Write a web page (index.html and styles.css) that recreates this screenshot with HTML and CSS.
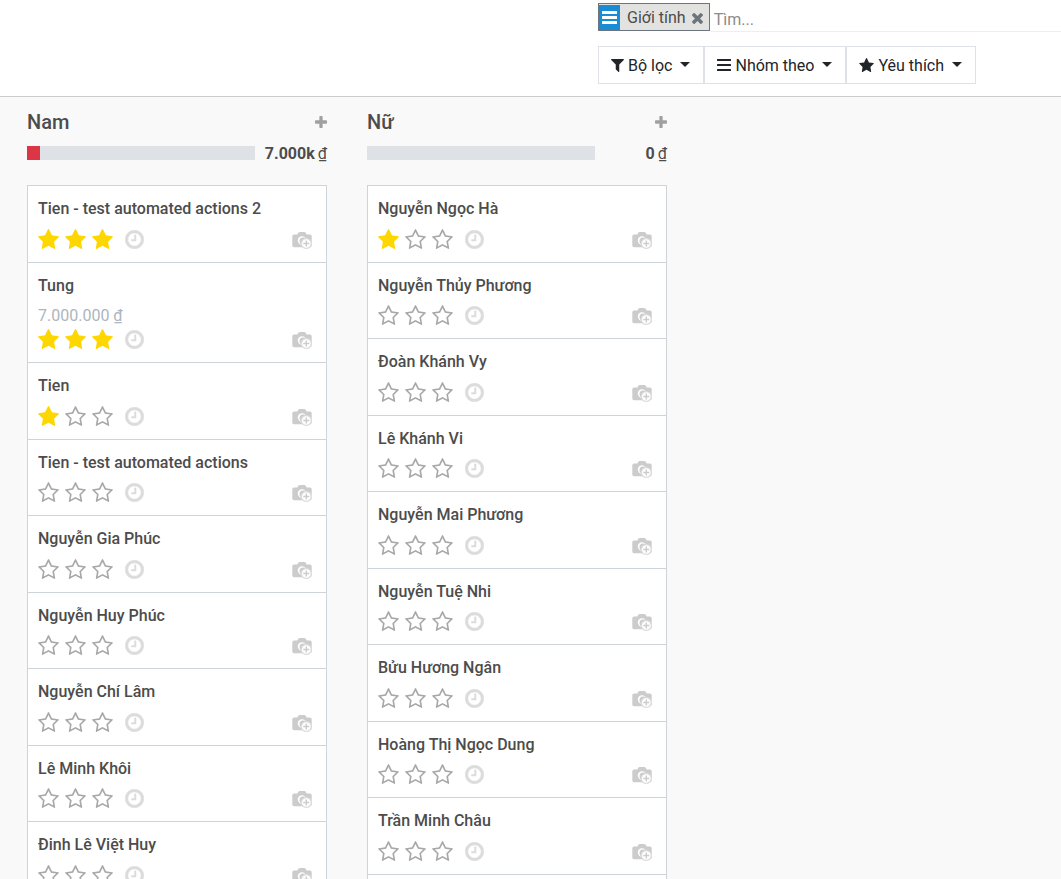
FILE: index.html
```html
<!DOCTYPE html>
<html lang="vi">
<head>
<meta charset="utf-8">
<meta name="viewport" content="width=device-width, initial-scale=1">
<title>Giới tính</title>
<link rel="stylesheet" href="styles.css">
</head>
<body>
<svg class="sprite" aria-hidden="true">
  <symbol id="star" viewBox="64 32 1664 1587"><path d="M1728 647q0 22-26 48l-363 354 86 500q1 7 1 20 0 21-10.500 35.500t-30.500 14.500q-19 0-40-12l-449-236-449 236q-22 12-40 12-21 0-31.500-14.500t-10.500-35.500q0-6 2-20l86-500-364-354q-25-27-25-48 0-37 56-46l502-73 225-455q19-41 49-41t49 41l225 455 502 73q56 9 56 46z"/></symbol>
  <symbol id="star-o" viewBox="64 32 1664 1587"><path d="M1201 1004l306-297-422-62-189-382-189 382-422 62 306 297-73 421 378-199 377 199zm527-357q0 22-26 48l-363 354 86 500q1 7 1 20 0 50-41 50-19 0-40-12l-449-236-449 236q-22 12-40 12-21 0-31.500-14.500t-10.500-35.500q0-6 2-20l86-500-364-354q-25-27-25-48 0-37 56-46l502-73 225-455q19-41 49-41t49 41l225 455 502 73q56 9 56 46z"/></symbol>
  <symbol id="clock" viewBox="108 108 1576 1576"><path stroke="currentColor" stroke-width="40" d="M1024 544v448q0 14-9 23t-23 9h-320q-14 0-23-9t-9-23v-64q0-14 9-23t23-9h224v-352q0-14 9-23t23-9h64q14 0 23 9t9 23zm416 352q0-148-73-273t-198-198-273-73-273 73-198 198-73 273 73 273 198 198 273 73 273-73 198-198 73-273zm224 0q0 209-103 385.500t-279.500 279.500-385.500 103-385.500-103-279.500-279.500-103-385.500 103-385.500 279.500-279.500 385.500-103 385.500 103 279.500 279.500 103 385.500z"/></symbol>
  <symbol id="camera" viewBox="0 0 20 17"><path d="M2 2.500h3.300l1-1.700Q6.800 0 7.700 0h4.600q.9 0 1.400.8l1 1.700H18q1.700 0 1.700 1.700v9.300q0 1.700-1.700 1.700H2Q.3 15.200 .3 13.500V4.200Q.3 2.500 2 2.500z"/><circle cx="10" cy="8.500" r="4.200" fill="#fff"/><circle cx="11" cy="9" r="3.500"/><circle cx="14.300" cy="11.500" r="5.500" fill="#ddd"/><circle cx="14.300" cy="11.500" r="4.300" fill="#fff"/><path d="M13.600 8.500h1.400v2.300h2.300v1.400H15v2.300h-1.400v-2.300h-2.300v-1.400h2.300z"/></symbol>
  <symbol id="plus" viewBox="192 128 1408 1408"><path d="M1600 736v192q0 40-28 68t-68 28h-416v416q0 40-28 68t-68 28h-192q-40 0-68-28t-28-68v-416h-416q-40 0-68-28t-28-68v-192q0-40 28-68t68-28h416v-416q0-40 28-68t68-28h192q40 0 68 28t28 68v416h416q40 0 68 28t28 68z"/></symbol>
  <symbol id="times" viewBox="302 366 1188 1188"><path d="M1490 1322q0 40-28 68l-136 136q-28 28-68 28t-68-28l-294-294-294 294q-28 28-68 28t-68-28l-136-136q-28-28-28-68t28-68l294-294-294-294q-28-28-28-68t28-68l136-136q28-28 68-28t68 28l294 294 294-294q28-28 68-28t68 28l136 136q28 28 28 68t-28 68l-294 294 294 294q28 28 28 68z"/></symbol>
  <symbol id="filter" viewBox="190 256 1412 1408"><path d="M1595 295q17 41-14 70l-493 493v742q0 42-39 59-13 5-25 5-27 0-45-19l-256-256q-19-19-19-45v-486l-493-493q-31-29-14-70 17-39 59-39h1280q42 0 59 39z"/></symbol>
  <symbol id="bars" viewBox="0 0 14 12"><path d="M.5 0h13q.5 0 .5.500v1q0 .5-.5.500H.5Q0 2 0 1.500v-1Q0 0 .5 0zM.5 5h13q.5 0 .5.500v1q0 .5-.5.500H.5Q0 7 0 6.500v-1Q0 5 .5 5zM.5 10h13q.5 0 .5.500v1q0 .5-.5.500H.5q-.5 0-.5-.5v-1q0-.5.5-.5z"/></symbol>
  <symbol id="bars-bold" viewBox="0 0 15 13"><path d="M.5 0h14q.5 0 .5.500v2q0 .5-.5.500H.5Q0 3 0 2.500v-2Q0 0 .5 0zM.5 5h14q.5 0 .5.500v2q0 .5-.5.500H.5Q0 8 0 7.500v-2Q0 5 .5 5zM.5 10h14q.5 0 .5.500v2q0 .5-.5.500H.5q-.5 0-.5-.5v-2q0-.5.5-.5z"/></symbol>
</svg>

<header class="control-panel">
  <div class="search-area">
    <div class="search-row">
      <div class="facet">
        <span class="facet-icon"><svg><use href="#bars-bold"/></svg></span>
        <span class="facet-label">Giới tính</span>
        <button class="facet-remove" type="button" aria-label="Xóa"><svg><use href="#times"/></svg></button>
      </div>
      <input class="search-input" type="text" placeholder="Tìm..." aria-label="Tìm">
    </div>
    <div class="menu-row">
      <button class="menu-btn" type="button"><svg class="icon-filter"><use href="#filter"/></svg><span>Bộ lọc</span><i class="caret"></i></button>
      <button class="menu-btn" type="button"><svg class="icon-bars"><use href="#bars"/></svg><span>Nhóm theo</span><i class="caret"></i></button>
      <button class="menu-btn" type="button"><svg class="icon-fav"><use href="#star"/></svg><span>Yêu thích</span><i class="caret"></i></button>
    </div>
  </div>
</header>

<main class="board">
  <section class="column">
    <div class="column-head"><h2>Nam</h2><button class="add" type="button" aria-label="Thêm"><svg><use href="#plus"/></svg></button></div>
    <div class="counter"><div class="bar"><div class="bar-fill" style="width: 5.7%"></div></div><div class="total"><b>7.000k</b><span>₫</span></div></div>
    <ul class="cards">
      <li class="card"><h3>Tien - test automated actions 2</h3>
        <div class="card-foot"><button class="star on" type="button" aria-label="1"><svg><use href="#star"/></svg></button><button class="star on" type="button" aria-label="2"><svg><use href="#star"/></svg></button><button class="star on" type="button" aria-label="3"><svg><use href="#star"/></svg></button><button class="clock" type="button" aria-label="Hoạt động"><svg><use href="#clock"/></svg></button><svg class="camera"><use href="#camera"/></svg></div></li>
      <li class="card"><h3>Tung</h3><p class="revenue">7.000.000 ₫</p>
        <div class="card-foot"><button class="star on" type="button" aria-label="1"><svg><use href="#star"/></svg></button><button class="star on" type="button" aria-label="2"><svg><use href="#star"/></svg></button><button class="star on" type="button" aria-label="3"><svg><use href="#star"/></svg></button><button class="clock" type="button" aria-label="Hoạt động"><svg><use href="#clock"/></svg></button><svg class="camera"><use href="#camera"/></svg></div></li>
      <li class="card"><h3>Tien</h3>
        <div class="card-foot"><button class="star on" type="button" aria-label="1"><svg><use href="#star"/></svg></button><button class="star" type="button" aria-label="2"><svg><use href="#star-o"/></svg></button><button class="star" type="button" aria-label="3"><svg><use href="#star-o"/></svg></button><button class="clock" type="button" aria-label="Hoạt động"><svg><use href="#clock"/></svg></button><svg class="camera"><use href="#camera"/></svg></div></li>
      <li class="card"><h3>Tien - test automated actions</h3>
        <div class="card-foot"><button class="star" type="button" aria-label="1"><svg><use href="#star-o"/></svg></button><button class="star" type="button" aria-label="2"><svg><use href="#star-o"/></svg></button><button class="star" type="button" aria-label="3"><svg><use href="#star-o"/></svg></button><button class="clock" type="button" aria-label="Hoạt động"><svg><use href="#clock"/></svg></button><svg class="camera"><use href="#camera"/></svg></div></li>
      <li class="card"><h3>Nguyễn Gia Phúc</h3>
        <div class="card-foot"><button class="star" type="button" aria-label="1"><svg><use href="#star-o"/></svg></button><button class="star" type="button" aria-label="2"><svg><use href="#star-o"/></svg></button><button class="star" type="button" aria-label="3"><svg><use href="#star-o"/></svg></button><button class="clock" type="button" aria-label="Hoạt động"><svg><use href="#clock"/></svg></button><svg class="camera"><use href="#camera"/></svg></div></li>
      <li class="card"><h3>Nguyễn Huy Phúc</h3>
        <div class="card-foot"><button class="star" type="button" aria-label="1"><svg><use href="#star-o"/></svg></button><button class="star" type="button" aria-label="2"><svg><use href="#star-o"/></svg></button><button class="star" type="button" aria-label="3"><svg><use href="#star-o"/></svg></button><button class="clock" type="button" aria-label="Hoạt động"><svg><use href="#clock"/></svg></button><svg class="camera"><use href="#camera"/></svg></div></li>
      <li class="card"><h3>Nguyễn Chí Lâm</h3>
        <div class="card-foot"><button class="star" type="button" aria-label="1"><svg><use href="#star-o"/></svg></button><button class="star" type="button" aria-label="2"><svg><use href="#star-o"/></svg></button><button class="star" type="button" aria-label="3"><svg><use href="#star-o"/></svg></button><button class="clock" type="button" aria-label="Hoạt động"><svg><use href="#clock"/></svg></button><svg class="camera"><use href="#camera"/></svg></div></li>
      <li class="card"><h3>Lê Minh Khôi</h3>
        <div class="card-foot"><button class="star" type="button" aria-label="1"><svg><use href="#star-o"/></svg></button><button class="star" type="button" aria-label="2"><svg><use href="#star-o"/></svg></button><button class="star" type="button" aria-label="3"><svg><use href="#star-o"/></svg></button><button class="clock" type="button" aria-label="Hoạt động"><svg><use href="#clock"/></svg></button><svg class="camera"><use href="#camera"/></svg></div></li>
      <li class="card"><h3>Đinh Lê Việt Huy</h3>
        <div class="card-foot"><button class="star" type="button" aria-label="1"><svg><use href="#star-o"/></svg></button><button class="star" type="button" aria-label="2"><svg><use href="#star-o"/></svg></button><button class="star" type="button" aria-label="3"><svg><use href="#star-o"/></svg></button><button class="clock" type="button" aria-label="Hoạt động"><svg><use href="#clock"/></svg></button><svg class="camera"><use href="#camera"/></svg></div></li>
    </ul>
  </section>

  <section class="column">
    <div class="column-head"><h2>Nữ</h2><button class="add" type="button" aria-label="Thêm"><svg><use href="#plus"/></svg></button></div>
    <div class="counter"><div class="bar"></div><div class="total"><b>0</b><span>₫</span></div></div>
    <ul class="cards">
      <li class="card"><h3>Nguyễn Ngọc Hà</h3>
        <div class="card-foot"><button class="star on" type="button" aria-label="1"><svg><use href="#star"/></svg></button><button class="star" type="button" aria-label="2"><svg><use href="#star-o"/></svg></button><button class="star" type="button" aria-label="3"><svg><use href="#star-o"/></svg></button><button class="clock" type="button" aria-label="Hoạt động"><svg><use href="#clock"/></svg></button><svg class="camera"><use href="#camera"/></svg></div></li>
      <li class="card"><h3>Nguyễn Thủy Phương</h3>
        <div class="card-foot"><button class="star" type="button" aria-label="1"><svg><use href="#star-o"/></svg></button><button class="star" type="button" aria-label="2"><svg><use href="#star-o"/></svg></button><button class="star" type="button" aria-label="3"><svg><use href="#star-o"/></svg></button><button class="clock" type="button" aria-label="Hoạt động"><svg><use href="#clock"/></svg></button><svg class="camera"><use href="#camera"/></svg></div></li>
      <li class="card"><h3>Đoàn Khánh Vy</h3>
        <div class="card-foot"><button class="star" type="button" aria-label="1"><svg><use href="#star-o"/></svg></button><button class="star" type="button" aria-label="2"><svg><use href="#star-o"/></svg></button><button class="star" type="button" aria-label="3"><svg><use href="#star-o"/></svg></button><button class="clock" type="button" aria-label="Hoạt động"><svg><use href="#clock"/></svg></button><svg class="camera"><use href="#camera"/></svg></div></li>
      <li class="card"><h3>Lê Khánh Vi</h3>
        <div class="card-foot"><button class="star" type="button" aria-label="1"><svg><use href="#star-o"/></svg></button><button class="star" type="button" aria-label="2"><svg><use href="#star-o"/></svg></button><button class="star" type="button" aria-label="3"><svg><use href="#star-o"/></svg></button><button class="clock" type="button" aria-label="Hoạt động"><svg><use href="#clock"/></svg></button><svg class="camera"><use href="#camera"/></svg></div></li>
      <li class="card"><h3>Nguyễn Mai Phương</h3>
        <div class="card-foot"><button class="star" type="button" aria-label="1"><svg><use href="#star-o"/></svg></button><button class="star" type="button" aria-label="2"><svg><use href="#star-o"/></svg></button><button class="star" type="button" aria-label="3"><svg><use href="#star-o"/></svg></button><button class="clock" type="button" aria-label="Hoạt động"><svg><use href="#clock"/></svg></button><svg class="camera"><use href="#camera"/></svg></div></li>
      <li class="card"><h3>Nguyễn Tuệ Nhi</h3>
        <div class="card-foot"><button class="star" type="button" aria-label="1"><svg><use href="#star-o"/></svg></button><button class="star" type="button" aria-label="2"><svg><use href="#star-o"/></svg></button><button class="star" type="button" aria-label="3"><svg><use href="#star-o"/></svg></button><button class="clock" type="button" aria-label="Hoạt động"><svg><use href="#clock"/></svg></button><svg class="camera"><use href="#camera"/></svg></div></li>
      <li class="card"><h3>Bửu Hương Ngân</h3>
        <div class="card-foot"><button class="star" type="button" aria-label="1"><svg><use href="#star-o"/></svg></button><button class="star" type="button" aria-label="2"><svg><use href="#star-o"/></svg></button><button class="star" type="button" aria-label="3"><svg><use href="#star-o"/></svg></button><button class="clock" type="button" aria-label="Hoạt động"><svg><use href="#clock"/></svg></button><svg class="camera"><use href="#camera"/></svg></div></li>
      <li class="card"><h3>Hoàng Thị Ngọc Dung</h3>
        <div class="card-foot"><button class="star" type="button" aria-label="1"><svg><use href="#star-o"/></svg></button><button class="star" type="button" aria-label="2"><svg><use href="#star-o"/></svg></button><button class="star" type="button" aria-label="3"><svg><use href="#star-o"/></svg></button><button class="clock" type="button" aria-label="Hoạt động"><svg><use href="#clock"/></svg></button><svg class="camera"><use href="#camera"/></svg></div></li>
      <li class="card"><h3>Trần Minh Châu</h3>
        <div class="card-foot"><button class="star" type="button" aria-label="1"><svg><use href="#star-o"/></svg></button><button class="star" type="button" aria-label="2"><svg><use href="#star-o"/></svg></button><button class="star" type="button" aria-label="3"><svg><use href="#star-o"/></svg></button><button class="clock" type="button" aria-label="Hoạt động"><svg><use href="#clock"/></svg></button><svg class="camera"><use href="#camera"/></svg></div></li>
      <li class="card" aria-hidden="true"></li>
    </ul>
  </section>
</main>
</body>
</html>
```
FILE: styles.css
```css
* { box-sizing: border-box; }

body {
  margin: 0;
  height: 100vh;
  display: flex;
  flex-direction: column;
  overflow: hidden;
  background: #f9f9f9;
  color: #4c4c4c;
  font-family: Roboto, "Noto Sans", sans-serif;
  font-size: 16px;
  line-height: 24px;
}

h2, h3, p, ul { margin: 0; padding: 0; font-weight: 500; }

ul { list-style: none; }

button {
  padding: 0;
  border: 0;
  background: none;
  color: inherit;
  font: inherit;
  cursor: pointer;
}

svg { display: block; fill: currentColor; }

.sprite { position: absolute; width: 0; height: 0; }

.control-panel {
  flex: none;
  display: grid;
  grid-template-columns: 31fr 24fr;
  padding: 3px 0 12px;
  background: #fff;
  border-bottom: 1px solid #ccc;
}

.search-area { grid-column: 2; }

.search-row { display: flex; margin-bottom: 14px; }

.facet {
  display: flex;
  align-items: center;
  height: 28px;
  margin-bottom: 1px;
  border: 1px solid #6c757d;
  background: #e2e2e0;
}

.facet-icon {
  display: flex;
  align-items: center;
  align-self: stretch;
  margin: 1px 0 0;
  padding: 0 3px;
  background: #1a8cd3;
  color: #fff;
}

.facet-icon svg { width: 15px; height: 13px; }

.icon-bars { width: 14px; height: 12px; }

.facet-label { padding: 2px 6px 0 7px; }

.facet-remove { margin: 2px 6px 0 0; color: #6c757d; }

.facet-remove svg { width: 11px; height: 11px; }

.search-input {
  flex: 1;
  min-width: 0;
  height: 29px;
  padding: 5px 4px 0;
  border: 0;
  border-bottom: 1px solid #eee;
  outline: 0;
  background: none;
  color: #4c4c4c;
  font: inherit;
}

.search-input::placeholder { color: #8c8c8c; opacity: 1; }

.menu-row { display: flex; }

.menu-btn {
  display: flex;
  align-items: center;
  height: 38px;
  padding: 0 13px 0 12px;
  border: 1px solid #dee2e6;
  color: #212529;
}

.menu-btn span { margin: 0 8px 0 4px; padding-top: 2px; }

.icon-filter { width: 13px; height: 13px; }

.icon-fav { width: 15px; height: 14px; }

.caret {
  margin-bottom: 2px;
  border: 5px solid transparent;
  border-top-color: currentColor;
  border-bottom: 0;
}

.board {
  flex: 1;
  min-height: 0;
  display: flex;
  align-items: flex-start;
  gap: 40px;
  padding: 13px 27px 0;
  overflow: hidden;
}

.column { flex: 0 0 300px; }

.column-head {
  display: flex;
  align-items: center;
  justify-content: space-between;
}

.column-head h2 { font-size: 20px; }

.add { color: #a0a0a0; }

.add svg { width: 12px; height: 12px; }

.counter {
  display: flex;
  align-items: center;
  justify-content: space-between;
  height: 24px;
  margin: 7px 0 20px;
}

.bar { width: 76%; height: 14px; background: #dee2e6; }

.bar-fill { height: 100%; background: #dc3545; }

.total { display: flex; gap: 3px; padding-top: 2px; }

.total b { font-weight: 700; }

.cards {
  border: 1px solid #ced4da;
  border-bottom: 0;
  background: #fff;
}

.card {
  padding: 11px 10px 13px;
  border-bottom: 1px solid #ced4da;
}

.card h3 { font-size: 16px; }

.card:nth-child(odd) .card-foot { margin-top: 8px; }

.card-foot {
  display: flex;
  align-items: center;
  margin-top: 7px;
}

.revenue { margin-top: 6px; color: #adb5bd; font-weight: 400; }

.card .revenue + .card-foot { margin-top: 1px; }

.star { margin-right: 6px; color: #a8a8a8; }

.star svg { width: 21px; height: 20px; }

.star.on { color: gold; }

.clock { margin-left: 6px; color: #dcdcdc; }

.clock svg { width: 19px; height: 19px; }

.camera { width: 20px; height: 17px; margin: 2px 4px 0 auto; color: #ccc; }
```
